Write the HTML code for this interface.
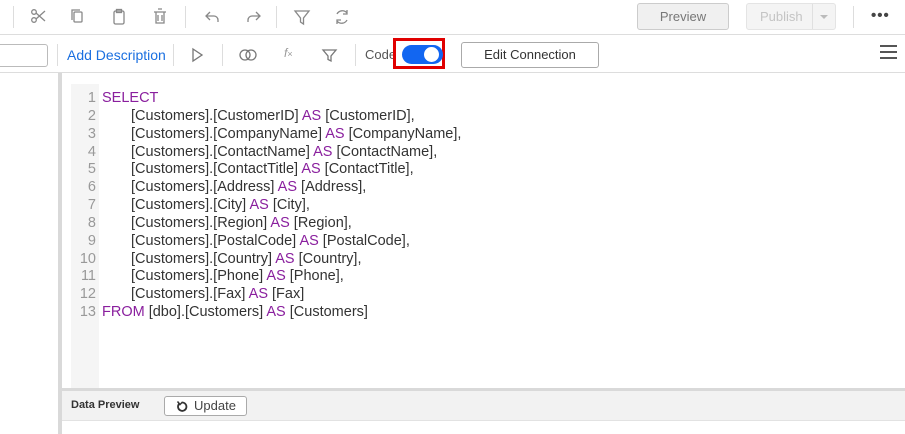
<!DOCTYPE html>
<html><head><style>
body{margin:0;width:905px;height:434px;overflow:hidden;background:#fff;font-family:"Liberation Sans",sans-serif;position:relative}
.a{position:absolute}
.code{position:absolute;left:70px;top:90px;font-size:14.5px;line-height:17.85px;color:#333}
.ln{position:absolute;left:0;width:26px;text-align:right;color:#999}
.k{color:#8a1f9e}
</style></head><body>
<div class="a" style="left:0;top:0;width:905px;height:34px;background:#fff;border-bottom:1px solid #ddd"></div>
<div class="a" style="left:13px;top:6px;width:1px;height:22px;background:#ddd"></div>
<div class="a" style="left:185px;top:6px;width:1px;height:22px;background:#ddd"></div>
<div class="a" style="left:276px;top:6px;width:1px;height:22px;background:#ddd"></div>
<div class="a" style="left:853px;top:6px;width:1px;height:22px;background:#ddd"></div>
<svg class="a" style="left:30px;top:8px" width="330" height="20" fill="none" stroke="#888" stroke-width="1.3">
<circle cx="4" cy="12" r="2.3"/><circle cx="4" cy="4" r="2.3"/><path d="M6 5L15 13M6 11L15 3"/>
<rect x="44" y="4" width="8" height="10" rx="1"/><path d="M42 12V2h8"/>
<rect x="84" y="3" width="10" height="13" rx="1.5"/><rect x="86.5" y="1.5" width="5" height="3"/>
<path d="M124 4h12M126 4v11h8V4M128 1h4M128 7v6M132 7v6"/>
<path d="M180 4l-4 4 4 4M176 8h8a4 4 0 014 4v2"/>
<path d="M226 4l4 4-4 4M230 8h-8a4 4 0 00-4 4v2"/>
<path d="M265 3h14l-5.5 7v6l-3-2v-4z"/>
<path d="M307 6a6 6 0 0110-1M317 2v4h-4M317 12a6 6 0 01-10 1M307 16v-4h4"/>
</svg>
<div class="a" style="left:637px;top:3px;width:90px;height:25px;border:1px solid #ccc;border-radius:3px;background:#f0f0f0;color:#777;font-size:13px;text-align:center;line-height:25px">Preview</div>
<div class="a" style="left:746px;top:3px;width:88px;height:25px;border:1px solid #e4e4e4;border-radius:3px;background:#f4f4f4;color:#c4c4c4;font-size:13px;line-height:25px"><span style="margin-left:13px">Publish</span><span class="a" style="left:65px;top:0;width:1px;height:25px;background:#e0e0e0"></span><span class="a" style="left:73px;top:11px;border:4px solid transparent;border-top:4px solid #bbb"></span></div>
<div class="a" style="left:871px;top:7px;font-size:15px;color:#444;font-weight:bold;letter-spacing:1px">•••</div>
<div class="a" style="left:0;top:35px;width:905px;height:37px;border-bottom:1px solid #ddd"></div>
<div class="a" style="left:-5px;top:44px;width:51px;height:21px;border:1px solid #bbb;border-radius:3px"></div>
<div class="a" style="left:57px;top:44px;width:1px;height:22px;background:#ddd"></div>
<div class="a" style="left:67px;top:47px;color:#1a6fe0;font-size:14px">Add Description</div>
<div class="a" style="left:173px;top:44px;width:1px;height:22px;background:#ddd"></div>
<div class="a" style="left:222px;top:44px;width:1px;height:22px;background:#ddd"></div>
<div class="a" style="left:355px;top:44px;width:1px;height:22px;background:#ddd"></div>
<svg class="a" style="left:190px;top:46px" width="160" height="18" fill="none" stroke="#777" stroke-width="1.3">
<path d="M3 3l9 6-9 6z"/>
<circle cx="55" cy="9" r="5"/><circle cx="61" cy="9" r="5"/>
<path d="M133 4h13l-5 6v5l-3-1.5V10z"/>
</svg>
<div class="a" style="left:284px;top:46px;color:#999;font-size:12px;font-style:italic">f<span style="font-size:9px;font-style:normal">×</span></div>
<div class="a" style="left:365px;top:47px;color:#555;font-size:13px">Code</div>
<div class="a" style="left:393px;top:38px;width:52px;height:31px;border:3px solid #e00000;box-sizing:border-box"></div>
<div class="a" style="left:402px;top:45px;width:41px;height:19px;border-radius:10px;background:#1266f1"></div>
<div class="a" style="left:424px;top:47px;width:15px;height:15px;border-radius:50%;background:#fff"></div>
<div class="a" style="left:461px;top:42px;width:136px;height:24px;border:1px solid #aaa;border-radius:3px;color:#333;font-size:13px;text-align:center;line-height:24px">Edit Connection</div>
<div class="a" style="left:880px;top:45px;width:17px;height:2px;background:#555;box-shadow:0 6px 0 #555,0 12px 0 #555"></div>
<div class="a" style="left:58px;top:73px;width:4px;height:361px;background:#d9d9d9"></div>
<div class="a" style="left:71px;top:84px;width:28px;height:305px;background:#f5f5f5"></div>
<div class="code">
<div><span class="ln">1</span><span style="margin-left:32px" class="k">SELECT</span></div>
<div><span class="ln">2</span><span style="margin-left:61px">[Customers].[CustomerID] <span class="k">AS</span> [CustomerID],</span></div>
<div><span class="ln">3</span><span style="margin-left:61px">[Customers].[CompanyName] <span class="k">AS</span> [CompanyName],</span></div>
<div><span class="ln">4</span><span style="margin-left:61px">[Customers].[ContactName] <span class="k">AS</span> [ContactName],</span></div>
<div><span class="ln">5</span><span style="margin-left:61px">[Customers].[ContactTitle] <span class="k">AS</span> [ContactTitle],</span></div>
<div><span class="ln">6</span><span style="margin-left:61px">[Customers].[Address] <span class="k">AS</span> [Address],</span></div>
<div><span class="ln">7</span><span style="margin-left:61px">[Customers].[City] <span class="k">AS</span> [City],</span></div>
<div><span class="ln">8</span><span style="margin-left:61px">[Customers].[Region] <span class="k">AS</span> [Region],</span></div>
<div><span class="ln">9</span><span style="margin-left:61px">[Customers].[PostalCode] <span class="k">AS</span> [PostalCode],</span></div>
<div><span class="ln">10</span><span style="margin-left:61px">[Customers].[Country] <span class="k">AS</span> [Country],</span></div>
<div><span class="ln">11</span><span style="margin-left:61px">[Customers].[Phone] <span class="k">AS</span> [Phone],</span></div>
<div><span class="ln">12</span><span style="margin-left:61px">[Customers].[Fax] <span class="k">AS</span> [Fax]</span></div>
<div><span class="ln">13</span><span style="margin-left:32px"><span class="k">FROM</span> [dbo].[Customers] <span class="k">AS</span> [Customers]</span></div>
</div>
<div class="a" style="left:62px;top:388px;width:843px;height:3px;background:#d9d9d9"></div>
<div class="a" style="left:62px;top:391px;width:843px;height:29px;background:#f2f2f2;border-bottom:1px solid #e2e2e2"></div>
<div class="a" style="left:71px;top:399px;font-size:11px;font-weight:bold;color:#333">Data Preview</div>
<div class="a" style="left:164px;top:396px;width:81px;height:18px;border:1px solid #aaa;border-radius:3px;background:#fff;font-size:13px;color:#444;line-height:18px"><svg class="a" style="left:11px;top:3px" width="12" height="12" fill="none" stroke="#333" stroke-width="1.8"><path d="M3 4a4.2 4.2 0 1 0 3-1.5"/><path d="M1.5 1.5L4 4.5 6.5 2" stroke-width="1.5"/></svg><span style="margin-left:29px">Update</span></div>
</body></html>
